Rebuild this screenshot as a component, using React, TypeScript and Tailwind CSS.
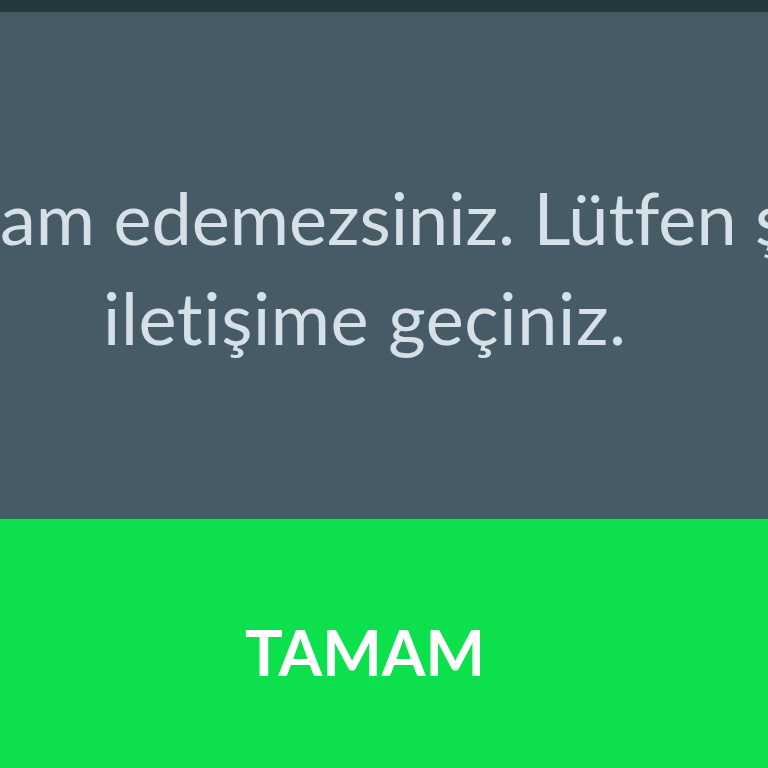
export default function App() {
  return (
    <div className="w-[768px] h-[768px] overflow-hidden flex flex-col bg-[#475b67] [font-variant-ligatures:none]" style={{ fontFamily: 'Lato, "Open Sans", sans-serif' }}>
      <div className="h-[12px] bg-[#253840] shrink-0" />
      <div className="h-[506px] shrink-0 bg-[#475b67] pt-[155px] overflow-hidden">
        <div className="text-[72px] leading-[100px] text-[#d6e0e7] whitespace-nowrap pl-[0px]">
          am edemezsiniz. Lütfen şirketiniz
        </div>
        <div className="text-[72px] leading-[100px] text-[#d6e0e7] whitespace-nowrap pl-[103px] tracking-[0.6px]">
          iletişime geçiniz.
        </div>
      </div>
      <div className="h-[1px] bg-[#1e7a48] shrink-0" />
      <div className="h-[2px] bg-[#1fd95a] shrink-0" />
      <div className="flex-1 bg-[#0ce04c] flex items-center justify-center pt-[14px] pr-[38px]">
        <span className="text-[63px] font-bold text-white leading-none">TAMAM</span>
      </div>
    </div>
  );
}
